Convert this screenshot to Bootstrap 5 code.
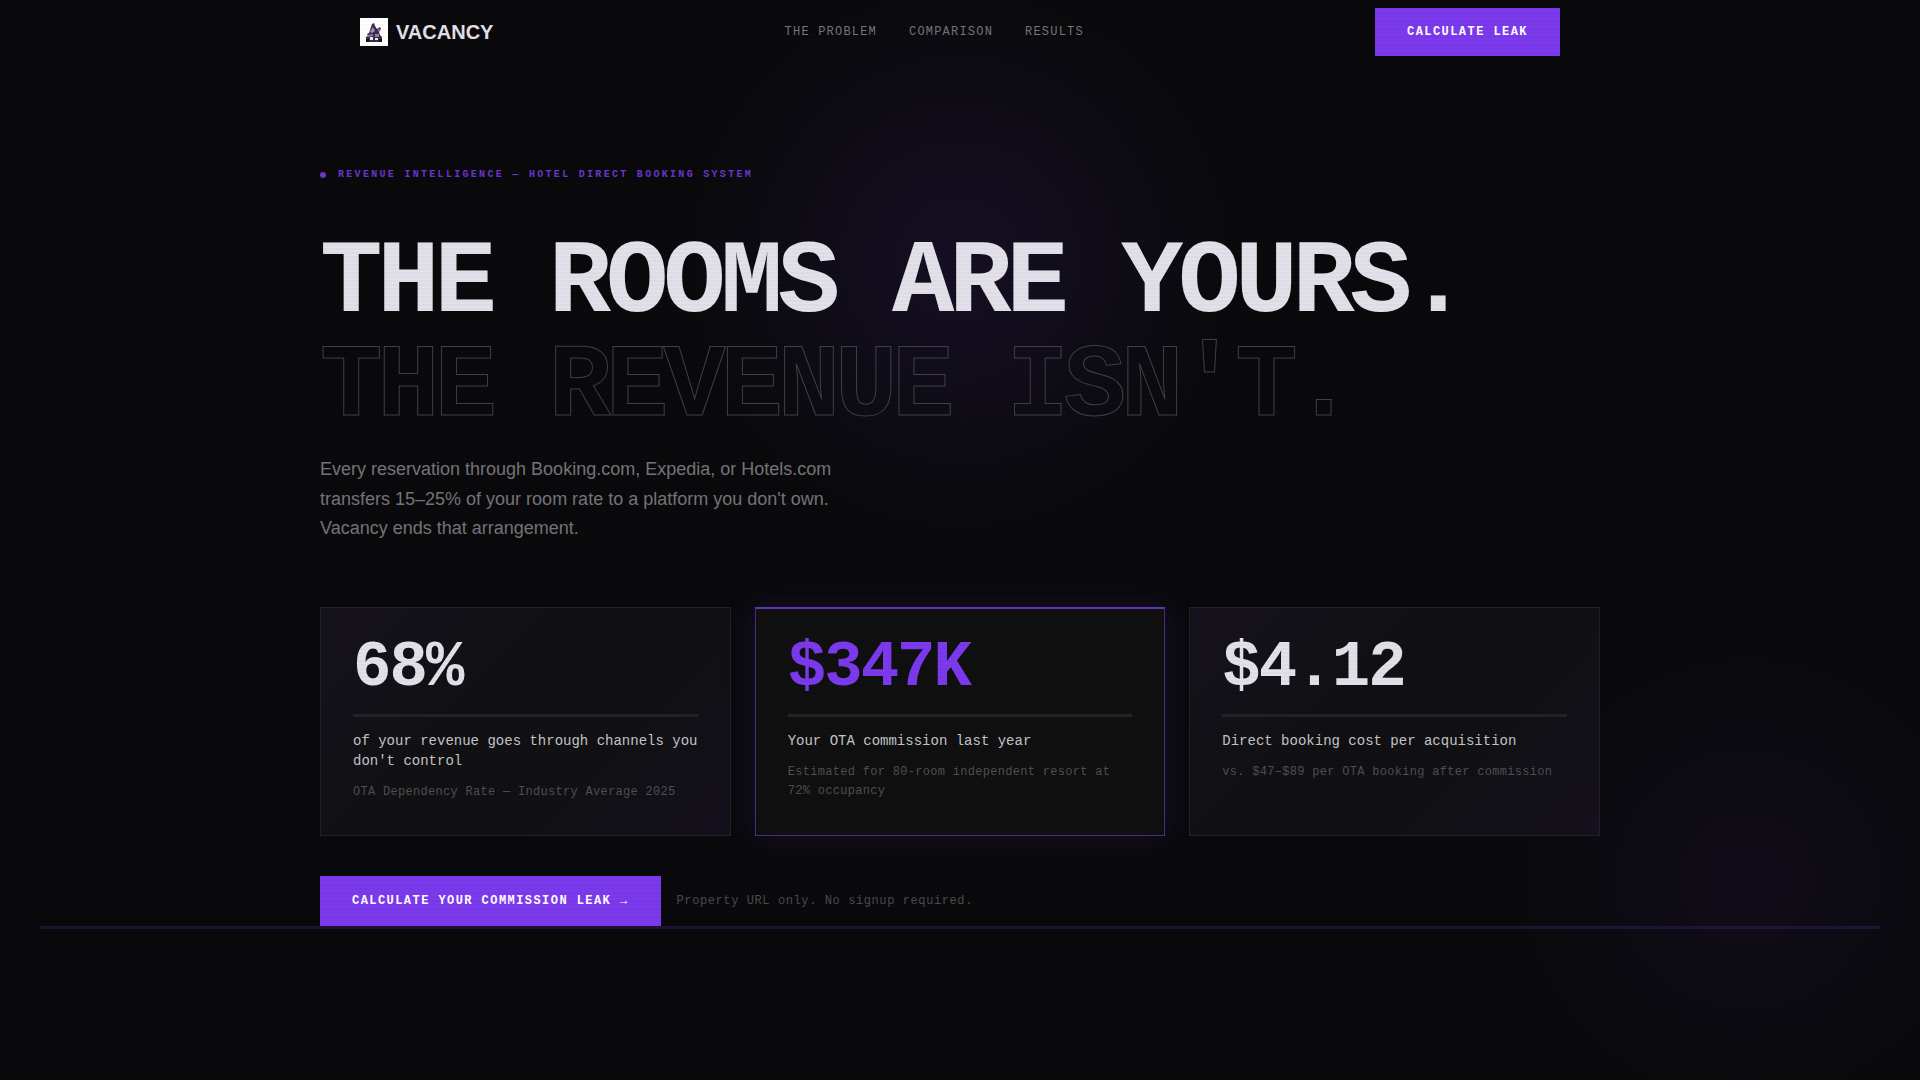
<!DOCTYPE html>
<html lang="en">
<head>
<meta charset="utf-8">
<meta name="viewport" content="width=device-width, initial-scale=1">
<title>Vacancy</title>
<link rel="stylesheet" href="https://cdn.jsdelivr.net/npm/bootstrap@5.3.0/dist/css/bootstrap.min.css">
<style>
:root {
  --violet: #7c3aed;
  --ink: #e2e0e8;
  --mono: "Liberation Mono", monospace;
  --sans: "Liberation Sans", sans-serif;
}
body {
  min-height: 100vh;
  color: var(--ink);
  font-family: var(--sans);
  background:
    radial-gradient(circle 280px at 50% 260px, rgba(124, 58, 237, .11), rgba(124, 58, 237, .04) 60%, transparent),
    radial-gradient(circle 240px at 91% 880px, rgba(124, 58, 237, .06), transparent),
    #0a0a0c;
}
/* faint scanlines over the whole page */
body::after {
  content: "";
  position: fixed;
  inset: 0;
  pointer-events: none;
  background: repeating-linear-gradient(0deg, transparent 0 2px, rgba(0, 0, 0, .02) 2px 4px);
}
a { text-decoration: none; }
.site-bar { height: 64px; }
.bar-inner { max-width: 1200px; }
.brand { font-size: 20px; font-weight: 700; line-height: 28px; color: var(--ink); }
.site-nav { gap: 32px; }
.nav-item-link { font: 400 12px/20px var(--mono); letter-spacing: .1em; color: #757578; }
.btn-violet {
  --bs-btn-padding-x: 32px;
  --bs-btn-padding-y: 14px;
  --bs-btn-border-width: 0;
  --bs-btn-border-radius: 0;
  --bs-btn-bg: var(--violet);
  --bs-btn-color: #fff;
  --bs-btn-hover-bg: #6d28d9;
  --bs-btn-hover-color: #fff;
  --bs-btn-font-family: var(--mono);
  --bs-btn-font-size: 12px;
  --bs-btn-font-weight: 700;
  --bs-btn-line-height: 20px;
  letter-spacing: .12em;
}
.btn-violet-tall { --bs-btn-padding-y: 15px; }
.hero { max-width: 1280px; padding-top: 100px; }
.kicker { font: 700 10px/22px var(--mono); letter-spacing: .23em; color: #6c35cc; margin-bottom: 45px; }
.kicker-dot { width: 6px; height: 6px; background: #6c35cc; }
.headline { font: 700 104px/104px var(--mono); letter-spacing: -.05em; margin-bottom: 16px; }
.headline-outline { color: transparent; -webkit-text-stroke: 1px #404044; }
.intro { max-width: 520px; font-size: 18px; line-height: 1.65; color: #757578; margin-bottom: 63px; }
.stat {
  padding: 32px;
  border: 1px solid #222226;
  background: linear-gradient(135deg, #16121d, #111113 40%, #111114 65%, #15111d);
  min-height: 229px;
}
.stat-lit {
  padding-top: 31px;
  border-color: #4c2a8c;
  border-top: 2px solid #6235b4;
  background: #101011;
  box-shadow: 0 0 32px rgba(124, 58, 237, .13);
}
.figure-num { font: 700 64px/56px var(--mono); letter-spacing: -.03em; margin-bottom: 18px; }
.figure-lit { color: var(--violet); }
.rule { height: 3px; background: #232327; margin-bottom: 14px; }
.stat-label { font: 400 14px/20px var(--mono); color: #c4c4c8; margin-bottom: 12px; }
.stat-hint { font: 400 12px/19px var(--mono); letter-spacing: .025em; color: #4f4f53; }
.cta-row { margin-top: 40px; }
.cta-note { font: 400 12px/20px var(--mono); letter-spacing: .05em; color: #4b4b4f; }
.floor-line { height: 3px; margin: 0 40px; background: rgba(124, 58, 237, .18); }
</style>
</head>
<body>
<header class="site-bar d-flex align-items-center">
  <div class="bar-inner container-fluid px-0 d-flex align-items-center justify-content-between">
    <a href="#" class="brand d-flex align-items-center gap-2">
      <svg width="28" height="28" viewBox="0 0 28 28" aria-hidden="true">
        <rect width="28" height="28" fill="#fff"/>
        <path d="M12 6l2-1 1 3 2 3 3-2 1 2-2 3 1 3 2 2v5H6v-5l2-1-1-2 2-1z" fill="#3a2f47"/>
        <path d="M13 9l2 4-3 2-2-1zM18 11l2 0-2 3z" fill="#a58dbd"/>
        <path d="M8 17l5-1v2l-5 1zM15 16h4v3h-4z" fill="#8c7ca0"/>
        <path d="M10 19h3v3h-3zM15 20h3v2h-3z" fill="#e9e4ee"/>
        <path d="M6 21h3v3H6zM19 21h3v3h-3z" fill="#16121c"/>
      </svg>
      <span>VACANCY</span>
    </a>
    <nav class="site-nav d-flex" aria-label="Main">
      <a class="nav-item-link" href="#problem">THE PROBLEM</a>
      <a class="nav-item-link" href="#comparison">COMPARISON</a>
      <a class="nav-item-link" href="#results">RESULTS</a>
    </nav>
    <button type="button" class="btn btn-violet">CALCULATE LEAK</button>
  </div>
</header>
<main>
  <section class="hero container-fluid px-0">
    <div class="kicker d-flex align-items-center">
      <span class="kicker-dot rounded-circle me-2"></span>
      <span class="ms-1">REVENUE INTELLIGENCE — HOTEL DIRECT BOOKING SYSTEM</span>
    </div>
    <h1 class="headline">
      <span class="d-block">THE ROOMS ARE YOURS.</span>
      <span class="d-block headline-outline">THE REVENUE ISN'T.</span>
    </h1>
    <p class="intro">Every reservation through Booking.com, Expedia, or Hotels.com transfers 15–25% of your room rate to a platform you don't own. Vacancy ends that arrangement.</p>
    <div class="row row-cols-1 row-cols-md-3 gx-4">
      <div class="col">
        <article class="stat h-100">
          <div class="figure-num">68%</div>
          <div class="rule"></div>
          <p class="stat-label">of your revenue goes through channels you don't control</p>
          <p class="stat-hint mb-0">OTA Dependency Rate — Industry Average 2025</p>
        </article>
      </div>
      <div class="col">
        <article class="stat stat-lit h-100">
          <div class="figure-num figure-lit">$347K</div>
          <div class="rule"></div>
          <p class="stat-label">Your OTA commission last year</p>
          <p class="stat-hint mb-0">Estimated for 80-room independent resort at 72% occupancy</p>
        </article>
      </div>
      <div class="col">
        <article class="stat h-100">
          <div class="figure-num">$4.12</div>
          <div class="rule"></div>
          <p class="stat-label">Direct booking cost per acquisition</p>
          <p class="stat-hint mb-0">vs. $47–$89 per OTA booking after commission</p>
        </article>
      </div>
    </div>
    <div class="cta-row d-flex align-items-center gap-3">
      <button type="button" class="btn btn-violet btn-violet-tall">CALCULATE YOUR COMMISSION LEAK →</button>
      <span class="cta-note">Property URL only. No signup required.</span>
    </div>
  </section>
  <div class="floor-line"></div>
</main>
<script src="https://cdn.jsdelivr.net/npm/bootstrap@5.3.0/dist/js/bootstrap.bundle.min.js"></script>
</body>
</html>
